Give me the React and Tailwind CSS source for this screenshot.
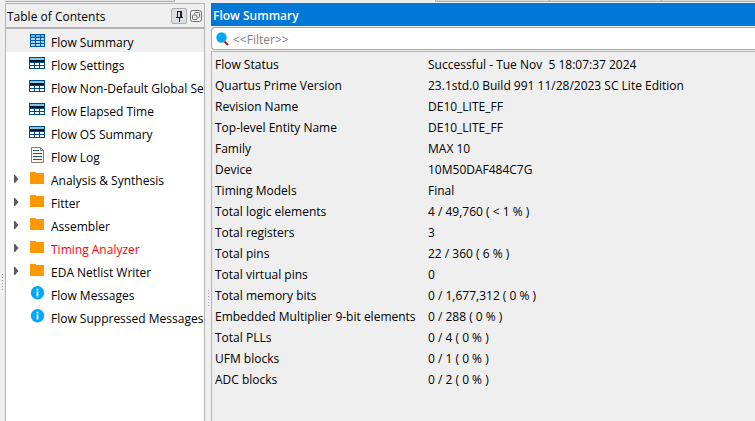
const contents = [
  { label: "Flow Summary", icon: "summary", selected: true },
  { label: "Flow Settings", icon: "table" },
  { label: "Flow Non-Default Global Settings", icon: "table" },
  { label: "Flow Elapsed Time", icon: "table" },
  { label: "Flow OS Summary", icon: "table" },
  { label: "Flow Log", icon: "log" },
  { label: "Analysis & Synthesis", icon: "folder", expandable: true },
  { label: "Fitter", icon: "folder", expandable: true },
  { label: "Assembler", icon: "folder", expandable: true },
  { label: "Timing Analyzer", icon: "folder", expandable: true, alert: true },
  { label: "EDA Netlist Writer", icon: "folder", expandable: true },
  { label: "Flow Messages", icon: "info" },
  { label: "Flow Suppressed Messages", icon: "info" },
];

const summary = [
  ["Flow Status", "Successful - Tue Nov  5 18:07:37 2024"],
  ["Quartus Prime Version", "23.1std.0 Build 991 11/28/2023 SC Lite Edition"],
  ["Revision Name", "DE10_LITE_FF"],
  ["Top-level Entity Name", "DE10_LITE_FF"],
  ["Family", "MAX 10"],
  ["Device", "10M50DAF484C7G"],
  ["Timing Models", "Final"],
  ["Total logic elements", "4 / 49,760 ( < 1 % )"],
  ["Total registers", "3"],
  ["Total pins", "22 / 360 ( 6 % )"],
  ["Total virtual pins", "0"],
  ["Total memory bits", "0 / 1,677,312 ( 0 % )"],
  ["Embedded Multiplier 9-bit elements", "0 / 288 ( 0 % )"],
  ["Total PLLs", "0 / 4 ( 0 % )"],
  ["UFM blocks", "0 / 1 ( 0 % )"],
  ["ADC blocks", "0 / 2 ( 0 % )"],
];

function ItemIcon({ kind }) {
  return (
    <svg width="16" height="16" viewBox="0 0 16 16" aria-hidden="true" className="shrink-0">
      {kind === "summary" && (
        <g shapeRendering="crispEdges">
          <rect x="1" y="2" width="15" height="13" fill="#005a9c" />
          <path fill="#5bb3e8" d="M2 3h4v2H2zM7 3h4v2H7zM12 3h3v2h-3z" />
          <path fill="#a9d5f5" d="M2 6h4v2H2zM7 6h4v2H7zM12 6h3v2h-3zM2 9h4v2H2zM7 9h4v2H7zM12 9h3v2h-3zM2 12h4v2H2zM7 12h4v2H7zM12 12h3v2h-3z" />
        </g>
      )}
      {kind === "table" && (
        <g shapeRendering="crispEdges">
          <rect x="0" y="2" width="16" height="12" fill="#004a86" />
          <rect x="1" y="3" width="14" height="2" fill="#7cc8ee" />
          <rect x="1" y="5" width="14" height="2" fill="#00131f" />
          <path fill="#fff" d="M1 8h4v2H1zM6 8h4v2H6zM11 8h4v2h-4zM1 11h4v2H1zM6 11h4v2H6zM11 11h4v2h-4z" />
        </g>
      )}
      {kind === "log" && (
        <g>
          <path fill="#fff8ea" stroke="#927c72" d="M2.500.500h9l3 3v12h-12z" />
          <path fill="none" stroke="#927c72" d="M11.500.500v3h3" />
          <path shapeRendering="crispEdges" stroke="#1558a8" d="M4 3.500h6M4 6.500h9M4 9.500h9M4 12.500h9" />
        </g>
      )}
      {kind === "folder" && <path fill="#ff9800" d="M1 2h6v1h8v11H1z" />}
      {kind === "info" && (
        <g>
          <circle cx="8.500" cy="7.700" r="6.700" fill="#03a9f4" />
          <path fill="#fff" d="M7.600 3.800h1.800v1.700H7.600zM7.600 6.500h1.800v5H7.600z" />
        </g>
      )}
    </svg>
  );
}

function Grip() {
  return (
    <svg width="3" height="18" viewBox="0 0 3 18" aria-hidden="true">
      <path stroke="#a8a8a8" strokeDasharray="1 2" d="M1.500 1v16" shapeRendering="crispEdges" />
    </svg>
  );
}

function TreeItem({ item }) {
  return (
    <li className={`flex h-[23px] items-center ${item.selected ? "bg-[#efefef]" : ""}`}>
      <span className="flex w-[23px] shrink-0 pl-2">
        {item.expandable && (
          <button type="button" aria-label={`Expand ${item.label}`} className="block">
            <svg width="5" height="8" viewBox="0 0 5 8" aria-hidden="true">
              <path fill="#5c5c5c" d="M0 0h1l3.500 4L1 8H0z" />
            </svg>
          </button>
        )}
      </span>
      <a href="#summary" className={`flex h-full min-w-0 flex-1 gap-1.5 pt-[3px] ${item.alert ? "text-[#ff0000]" : "text-black"}`}>
        <ItemIcon kind={item.icon} />
        <span className="overflow-hidden whitespace-nowrap pt-[3px] leading-4">{item.label}</span>
      </a>
    </li>
  );
}

export default function App() {
  return (
    <div className="flex h-screen flex-col overflow-hidden bg-[#efefef] font-['Open_Sans','Noto_Sans',sans-serif] text-[12px] text-black">
      <div className="flex h-[3px] shrink-0 justify-between pl-[5px]">
        <div className="h-0.5 w-[170px] border-r border-b border-[#b0b0b0] bg-[#e4e4e4]" />
        <div className="flex h-0.5 w-[320px] border-b border-l border-[#b0b0b0] bg-[#d8d8d8]">
          <div className="w-[114px] border-r border-[#b0b0b0]" />
          <div className="w-[112px] border-r border-[#b0b0b0]" />
        </div>
      </div>
      <div className="flex min-h-0 flex-1">
        <div className="flex w-[5px] shrink-0 items-center justify-center pt-[140px]">
          <Grip />
        </div>
        <nav aria-label="Table of Contents" className="flex w-[200px] shrink-0 flex-col border border-b-0 border-[#b4b4b4] bg-white">
          <header className="flex h-[25px] shrink-0 items-center border-b-2 border-[#b4b4b4] bg-[#efefef] pr-0.5 pl-px">
            <h2 className="flex-1 pt-0.5">Table of Contents</h2>
            <button type="button" aria-label="Pin panel" className="flex size-4 items-center justify-center rounded-xs border border-[#b0b0b0] bg-[#dcdfe3]">
              <svg width="9" height="12" viewBox="0 0 9 12" aria-hidden="true" shapeRendering="crispEdges">
                <path fill="none" stroke="#202020" d="M2.500 7V1.500h4V7M1 7.500h7M4.500 8v4" />
                <path stroke="#202020" d="M5.500 1v6" />
              </svg>
            </button>
            <button type="button" aria-label="Detach panel" className="ml-[3px]">
              <svg width="12" height="12" viewBox="0 0 12 12" fill="none" stroke="#707070" aria-hidden="true">
                <rect x=".5" y=".5" width="11" height="11" rx="2" />
                <rect x="2.500" y="5" width="4.500" height="4.500" rx="1" />
                <path d="M4.500 4V3.500a1 1 0 0 1 1-1h3a1 1 0 0 1 1 1v3a1 1 0 0 1-1 1H8" />
              </svg>
            </button>
          </header>
          <ul>
            {contents.map((item) => (
              <TreeItem key={item.label} item={item} />
            ))}
          </ul>
        </nav>
        <div className="flex w-1.5 shrink-0 items-center justify-center pt-[172px]">
          <Grip />
        </div>
        <main id="summary" className="flex min-w-0 flex-1 flex-col">
          <h1 className="flex h-[23px] shrink-0 items-center bg-[#0078d7] px-0.5 pt-0.5 font-semibold text-white">Flow Summary</h1>
          <label className="mt-px flex h-[23px] shrink-0 items-center gap-1 rounded-l-sm border border-r-0 border-[#a8a8a8] bg-white pl-1">
            <svg width="13" height="14" viewBox="0 0 13 14" aria-hidden="true">
              <path stroke="#b71c1c" strokeWidth="2" d="m8 9 4 4" />
              <circle cx="5.500" cy="5.500" r="5.200" fill="#03a9f4" />
            </svg>
            <input type="text" aria-label="Filter" placeholder="<<Filter>>" className="min-w-0 flex-1 bg-transparent pt-0.5 outline-none placeholder:text-[#808080]" />
          </label>
          <section className="mt-px flex-1 border-t border-l border-[#b4b4b4] pt-0.5">
            <table className="w-full table-fixed border-collapse text-left">
              <tbody>
                {summary.map(([name, value]) => (
                  <tr key={name} className="h-[21px]">
                    <th scope="row" className="w-[213px] p-0 pl-[3px] font-normal whitespace-nowrap">{name}</th>
                    <td className="p-0 pl-[3px] whitespace-pre">{value}</td>
                  </tr>
                ))}
              </tbody>
            </table>
          </section>
        </main>
      </div>
    </div>
  );
}
